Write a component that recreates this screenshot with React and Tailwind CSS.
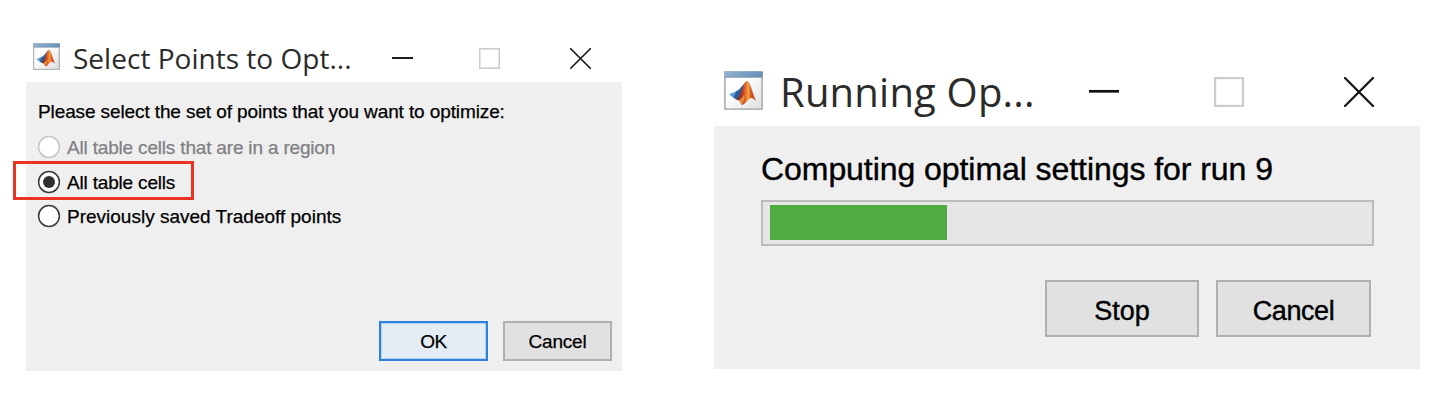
import React from "react";

function AppIcon({ className }) {
  return (
    <svg viewBox="0 0 39 39" className={className}>
      <defs>
        <linearGradient id="bar" x1="0" x2="1">
          <stop offset="0" stopColor="#93b3d3" />
          <stop offset="1" stopColor="#6590b8" />
        </linearGradient>
        <linearGradient id="page" x1="0" y1="0" x2="1" y2="1">
          <stop offset="0.4" stopColor="#ffffff" />
          <stop offset="1" stopColor="#dcdde0" />
        </linearGradient>
        <linearGradient id="peak" x1="0" x2="1">
          <stop offset="0" stopColor="#5d2c44" />
          <stop offset="0.3" stopColor="#b5341f" />
          <stop offset="0.5" stopColor="#e8702a" />
          <stop offset="0.62" stopColor="#f5a344" />
          <stop offset="0.75" stopColor="#d3541f" />
          <stop offset="1" stopColor="#b8402a" />
        </linearGradient>
      </defs>
      <rect x="0.8" y="0.8" width="37.4" height="37.4" rx="1.2" fill="url(#page)" stroke="#b3b5b9" strokeWidth="2" />
      <rect x="0.3" y="0.6" width="38.4" height="5.6" rx="1" fill="url(#bar)" />
      <path d="M1 6.2H38" stroke="#7089a3" strokeWidth="0.8" />
      <path d="M5 23.500L12.500 20L17 22.500L12 28.500Z" fill="#5a9fd4" />
      <path d="M12.500 20C16 19 19 13 22.500 10.500L18.500 23L13.500 29L9.500 26.500Z" fill="#2f5f98" />
      <path d="M12 28.500C15 27 17 22 19 16C20 13 21.500 10 23.300 10C26 10 28 21 32 30C29.500 27.500 27.500 26.500 26 27.500C23 29 21.500 33 18 34C16.500 31 15 28.500 12 28.500Z" fill="url(#peak)" />
      <path d="M14.500 29C17 28.500 19 26 20.500 23C20.500 27 19.500 31 18 34C17 31.500 16 30 14.500 29Z" fill="#f2a03c" opacity="0.85" />
    </svg>
  );
}

function Minimize({ className }) {
  return (
    <svg viewBox="0 0 30 30" className={className}>
      <path d="M0 14.300H30" stroke="#111" strokeWidth="2.700" />
    </svg>
  );
}

function Maximize({ className }) {
  return (
    <svg viewBox="0 0 30 30" className={className}>
      <rect x="1.100" y="1.100" width="27.800" height="27.800" fill="none" stroke="#cbcbcb" strokeWidth="2.200" />
    </svg>
  );
}

function Close({ className }) {
  return (
    <svg viewBox="0 0 30 30" className={className}>
      <path d="M1 1L29 29M29 1L1 29" stroke="#161616" strokeWidth="2.300" strokeLinecap="round" />
    </svg>
  );
}

function Radio({ checked, disabled }) {
  return (
    <svg viewBox="0 0 24 24" className="size-6 shrink-0">
      <circle cx="12" cy="12" r="10.400" fill="#fff" stroke={disabled ? "#c6c6c6" : "#3c3c3c"} strokeWidth="1.500" />
      {checked && <circle cx="12" cy="12" r="6" fill="#303030" />}
    </svg>
  );
}

function Option({ label, checked, disabled, tracking }) {
  return (
    <div className="flex h-[34.5px] items-center">
      <Radio checked={checked} disabled={disabled} />
      <span className={`mt-[2px] ml-[6px] whitespace-nowrap text-[19px] leading-[24px] ${disabled ? "text-[#808084]" : "text-black"} ${tracking}`}>
        {label}
      </span>
    </div>
  );
}

function SelectDialog() {
  return (
    <section className="relative mt-[34px] ml-[26px] h-[337px] w-[596px] shrink-0 [-webkit-text-stroke-width:0.25px]">
      <header className="flex h-12 items-center pl-[7px] [-webkit-text-stroke-width:0px]">
        <AppIcon className="mt-[-3px] size-[27px]" />
        <h1 className="ml-[13px] w-[319px] whitespace-nowrap font-['Open_Sans','Noto_Sans',sans-serif] text-[28px] leading-[40px] tracking-[0.02px] text-[#2b2b2b]">
          Select Points to Opt...
        </h1>
        <Minimize className="size-[21px]" />
        <Maximize className="ml-[66px] size-[21px]" />
        <Close className="ml-[70px] size-[21px]" />
      </header>
      <div className="flex h-[289px] flex-col bg-[#efefef] pt-[18px]">
        <p className="whitespace-nowrap pl-[12px] text-[19px] leading-[24px] tracking-[-0.11px]">
          Please select the set of points that you want to optimize:
        </p>
        <div className="mt-[6px] pl-[11px]">
          <Option label="All table cells that are in a region" disabled tracking="tracking-[-0.18px]" />
          <Option label="All table cells" checked tracking="tracking-[-0.18px]" />
          <Option label="Previously saved Tradeoff points" tracking="tracking-normal" />
        </div>
        <div className="mt-auto mr-[10px] mb-[10px] flex justify-end gap-[15px]">
          <button className="h-10 w-[109px] border-2 border-[#2f80d8] bg-[#e4edf5] pt-[2px] text-[19px] tracking-[-0.5px] ring-1 ring-inset ring-[#b5d3f0]">OK</button>
          <button className="h-10 w-[109px] border-2 border-[#b0b0b0] bg-[#e1e1e1] pt-[2px] text-[19px] tracking-[-0.2px]">Cancel</button>
        </div>
      </div>
      <div className="absolute top-[127px] -left-[13px] h-[39px] w-[181px] border-3 border-[#e93323]" />
    </section>
  );
}

function ProgressDialog() {
  return (
    <section className="mt-[58px] ml-[92px] h-[311px] w-[706px] shrink-0 [-webkit-text-stroke-width:0.4px]">
      <header className="flex h-[68px] items-center pl-[10px] [-webkit-text-stroke-width:0px]">
        <AppIcon className="mt-[-4px] size-[39px]" />
        <h1 className="ml-[17px] w-[309px] whitespace-nowrap font-['Open_Sans','Noto_Sans',sans-serif] text-[40px] leading-[56px] tracking-[0.2px] text-[#2b2b2b]">
          Running Op...
        </h1>
        <Minimize className="size-[30px]" />
        <Maximize className="ml-[95px] size-[30px]" />
        <Close className="ml-[100px] size-[30px]" />
      </header>
      <div className="flex h-[243px] flex-col bg-[#efefef] pt-[23px] pr-[47px] pl-[47px]">
        <p className="whitespace-nowrap text-[32px] leading-[40px] tracking-[-0.06px]">Computing optimal settings for run 9</p>
        <div className="mt-[11px] h-[46px] w-[613px] border-2 border-[#bcbcbc] bg-[#e6e6e6] pt-[3px] pl-[7px]">
          <div className="h-[35px] w-[177px] bg-[#4fac40]" />
        </div>
        <div className="mt-[34px] mr-[2px] flex justify-end gap-[17px]">
          <button className="h-[57px] w-[154px] border-2 border-[#b0b0b0] bg-[#e1e1e1] pt-[5px] text-[27px]">Stop</button>
          <button className="h-[57px] w-[155px] border-2 border-[#b0b0b0] bg-[#e1e1e1] pt-[5px] text-[27px] tracking-[-0.4px]">Cancel</button>
        </div>
      </div>
    </section>
  );
}

export default function App() {
  return (
    <main className="flex h-[404px] w-[1446px] items-start overflow-hidden bg-white font-['Liberation_Sans',Arial,sans-serif] text-black">
      <SelectDialog />
      <ProgressDialog />
    </main>
  );
}
